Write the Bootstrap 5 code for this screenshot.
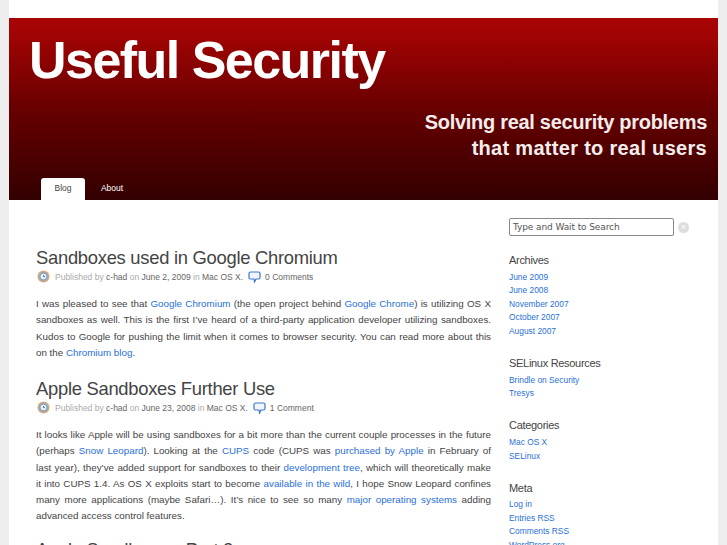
<!DOCTYPE html>
<html lang="en">
<head>
<meta charset="utf-8">
<title>Useful Security</title>
<link href="https://cdn.jsdelivr.net/npm/bootstrap@5.3.0/dist/css/bootstrap.min.css" rel="stylesheet">
<style>
html,body{height:545px;overflow:hidden}
body{background:#eee;font-family:"Liberation Sans",Arial,sans-serif;font-size:10px;color:#444}
.page-wrap{width:709px;margin-left:9px;background:#fff;padding-top:18px;height:545px;overflow:hidden}
.masthead{height:182px;background:linear-gradient(#a80404 0,#a00303 10%,#680000 50%,#330000 100%);color:#fff}
.site-title{font-size:52px;font-weight:700;line-height:60px;padding:12px 0 0 20px;letter-spacing:-1.53px}
.site-tag{font-size:20px;font-weight:700;line-height:26.5px;text-align:right;padding-right:11px;margin-top:18.6px;color:#f3eded;letter-spacing:-.3px}
.tag-wide{letter-spacing:.3px}
.tabs{padding-left:32px}
.tabs a{display:block;width:44px;height:22px;line-height:20px;text-align:center;font-size:8.5px;color:#fff;text-decoration:none}
.tabs a.on{background:#fff;color:#444;border-radius:3px 3px 0 0}
.tabs a+a{width:54px}
.main-col{width:482px;padding:45px 0 0 27px}
.post-title{font-size:18.4px;font-weight:400;line-height:26px;margin:0;color:#444;letter-spacing:-.28px}
.post-meta{font-size:8.5px;line-height:14px;color:#aaa;margin:-1.5px 0 0 1px;gap:5px}
.post-meta b{font-weight:400;color:#666}
.post-meta svg+b{margin-left:-1px}
.post-body{font-size:9.8px;line-height:16.25px;text-align:justify;margin:12.5px 0 15px;color:#444}
.post-body.tight{margin-bottom:12px}
a{color:#2a70d8;text-decoration:none}
.side-col{width:210px;padding:18px 0 0 18px}
.search-input{width:165px;height:18px;border:1px solid #888;border-radius:2px;font-size:9px;line-height:16px;padding:0 3px;color:#555;font-family:"DejaVu Sans",sans-serif;letter-spacing:-.1px}
.clear-btn{width:11px;height:11px;border-radius:50%;background:#ddd;color:#fff;font-size:9px;line-height:11px;text-align:center;margin-left:4px}
.search-row{margin-bottom:16px}
.side-head{font-size:11px;font-weight:400;line-height:16px;margin:0 0 2.7px;color:#444;letter-spacing:-.3px}
.side-list{font-size:8.4px;line-height:13.6px;margin:0 0 16.4px}
</style>
</head>
<body>
<div class="page-wrap">
  <header class="masthead d-flex flex-column">
    <div class="site-title">Useful Security</div>
    <div class="site-tag">Solving real security problems<br><span class="tag-wide">that matter to real users</span></div>
    <nav class="tabs d-flex mt-auto"><a class="on" href="#">Blog</a><a href="#">About</a></nav>
  </header>
  <div class="d-flex">
    <main class="main-col">
      <article>
        <h2 class="post-title">Sandboxes used in Google Chromium</h2>
        <div class="post-meta d-flex align-items-center">
          <svg width="13" height="13" viewBox="0 0 13 13"><circle cx="6.5" cy="6.5" r="6" fill="#d9a878"/><circle cx="6.5" cy="6.5" r="4.4" fill="#7fa8cf"/><circle cx="6.5" cy="6.5" r="2.8" fill="#eef3f8"/><path d="M6.5 5v1.7h1.5" stroke="#4a74a0" fill="none"/></svg>
          <span>Published by <b>c-had</b> on <b>June 2, 2009</b> in <b>Mac OS X.</b></span>
          <svg width="13" height="12" viewBox="0 0 13 12"><path d="M2.500 1h8A1.500 1.500 0 0 1 12 2.500v4A1.500 1.500 0 0 1 10.500 8H8l-1.500 3L6 8H2.500A1.500 1.500 0 0 1 1 6.500v-4A1.500 1.500 0 0 1 2.500 1z" fill="#f2f6fc" stroke="#3a78cc" stroke-width="1.200"/></svg>
          <b>0 Comments</b>
        </div>
        <p class="post-body">I was pleased to see that <a href="#">Google Chromium</a> (the open project behind <a href="#">Google Chrome</a>) is utilizing OS X sandboxes as well. This is the first I’ve heard of a third-party application developer utilizing sandboxes. Kudos to Google for pushing the limit when it comes to browser security. You can read more about this on&nbsp;the <a href="#">Chromium blog</a>.</p>
      </article>
      <article>
        <h2 class="post-title">Apple Sandboxes Further Use</h2>
        <div class="post-meta d-flex align-items-center">
          <svg width="13" height="13" viewBox="0 0 13 13"><circle cx="6.5" cy="6.5" r="6" fill="#d9a878"/><circle cx="6.5" cy="6.5" r="4.4" fill="#7fa8cf"/><circle cx="6.5" cy="6.5" r="2.8" fill="#eef3f8"/><path d="M6.500 5v1.700h1.500" stroke="#4a74a0" fill="none"/></svg>
          <span>Published by <b>c-had</b> on <b>June 23, 2008</b> in <b>Mac OS X.</b></span>
          <svg width="13" height="12" viewBox="0 0 13 12"><path d="M2.500 1h8A1.500 1.500 0 0 1 12 2.500v4A1.500 1.500 0 0 1 10.500 8H8l-1.500 3L6 8H2.500A1.500 1.500 0 0 1 1 6.500v-4A1.500 1.500 0 0 1 2.500 1z" fill="#f2f6fc" stroke="#3a78cc" stroke-width="1.200"/></svg>
          <b>1 Comment</b>
        </div>
        <p class="post-body tight">It looks like Apple will be using sandboxes for a bit more than the current couple processes in the future (perhaps <a href="#">Snow Leopard</a>). Looking at the <a href="#">CUPS</a> code (CUPS was <a href="#">purchased by Apple</a> in February of last&nbsp;year), they’ve added support for sandboxes to their <a href="#">development tree</a>, which will theoretically make it&nbsp;into CUPS 1.4. As OS X exploits start to become <a href="#">available in the wild</a>, I hope Snow Leopard confines many&nbsp;more applications (maybe Safari…). It’s nice to see so many <a href="#">major operating systems</a> adding advanced&nbsp;access control features.</p>
      </article>
      <article>
        <h2 class="post-title">Apple Sandboxes, Part 2</h2>
      </article>
    </main>
    <aside class="side-col">
      <div class="search-row d-flex align-items-center">
        <div class="search-input">Type and Wait to Search</div>
        <div class="clear-btn">×</div>
      </div>
      <h3 class="side-head">Archives</h3>
      <ul class="side-list list-unstyled"><li><a href="#">June 2009</a></li><li><a href="#">June 2008</a></li><li><a href="#">November 2007</a></li><li><a href="#">October 2007</a></li><li><a href="#">August 2007</a></li></ul>
      <h3 class="side-head">SELinux Resources</h3>
      <ul class="side-list list-unstyled"><li><a href="#">Brindle on Security</a></li><li><a href="#">Tresys</a></li></ul>
      <h3 class="side-head">Categories</h3>
      <ul class="side-list list-unstyled"><li><a href="#">Mac OS X</a></li><li><a href="#">SELinux</a></li></ul>
      <h3 class="side-head">Meta</h3>
      <ul class="side-list list-unstyled"><li><a href="#">Log in</a></li><li><a href="#">Entries RSS</a></li><li><a href="#">Comments RSS</a></li><li><a href="#">WordPress.org</a></li></ul>
    </aside>
  </div>
</div>
<script src="https://cdn.jsdelivr.net/npm/bootstrap@5.3.0/dist/js/bootstrap.bundle.min.js"></script>
</body>
</html>
